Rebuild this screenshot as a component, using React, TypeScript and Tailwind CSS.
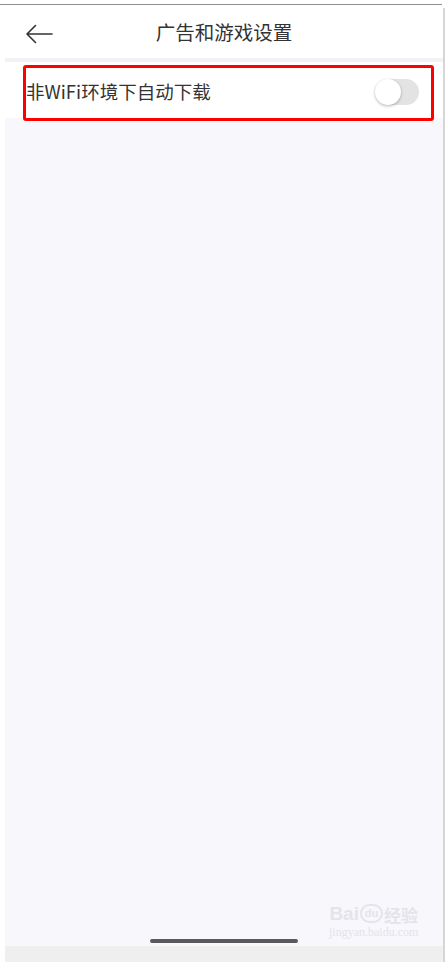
import React from "react";

export default function App() {
  const font = { fontFamily: '"Noto Sans CJK SC", "Noto Sans", sans-serif' };
  return (
    <div className="relative w-[446px] h-[962px] bg-white overflow-hidden flex flex-col" style={font}>
      <div className="h-[4px] shrink-0" />
      <div className="h-px w-[442px] bg-[#8e8e8e] shrink-0" />
      <div className="flex flex-1 min-h-0">
        <div className="w-[5px] shrink-0 bg-white" />
        <div className="w-[438px] flex flex-col">
          {/* header */}
          <div className="h-[53px] bg-white flex items-center relative shrink-0">
            <svg className="absolute left-[20px] top-[19px]" width="28" height="20" viewBox="0 0 28 20" fill="none">
              <path d="M27 10H2M10.5 1.5L2 10l8.5 8.5" stroke="#333" strokeWidth="1.6" strokeLinecap="round" strokeLinejoin="round" />
            </svg>
            <div className="flex-1 text-center text-[19.5px] text-[#333] leading-none">广告和游戏设置</div>
          </div>
          <div className="h-[4px] bg-[#f2f2f6] shrink-0" />
          {/* row */}
          <div className="h-[56px] bg-white flex items-center justify-between pl-[21px] pr-[24px] shrink-0">
            <span className="text-[18.5px] text-[#333] leading-none pt-[2px]">非WiFi环境下自动下载</span>
            <div className="relative w-[44px] h-[26px] mt-[3px]">
              <div className="absolute right-0 top-0 w-[38px] h-[26px] rounded-full bg-[#e3e3e3]" />
              <div className="absolute left-0 top-0 w-[26px] h-[26px] rounded-full bg-white shadow-[0_1px_3px_rgba(0,0,0,0.3)]" />
            </div>
          </div>
          {/* content */}
          <div className="flex-1 bg-[#f7f7fc] flex flex-col justify-end items-center pb-[3px] relative">
            <div className="w-[148px] h-[4px] rounded-full bg-[#5a5a5e]" />
          </div>
          <div className="h-[16px] bg-[#efefef] shrink-0" />
        </div>
        <div className="w-[2px] bg-[#d6d6d6] mt-[3px] shrink-0" />
        <div className="flex-1 bg-white" />
      </div>

      {/* red annotation box */}
      <div className="absolute left-[23px] top-[65px] w-[411px] h-[56px] border-[3px] border-[#ff0000] rounded-[3px]" />

      {/* watermark */}
      <div className="absolute left-[329px] top-[904px] flex flex-col items-center text-[#e4e4ea]" style={{ fontFamily: '"Liberation Serif", serif' }}>
        <div className="flex items-end gap-[1px] leading-none">
          <span className="text-[19px] font-bold" style={{ fontFamily: '"Liberation Sans", sans-serif' }}>Bai</span>
          <span className="w-[23px] h-[19px] rounded-full border-2 border-[#e4e4ea] text-[11px] font-bold flex items-center justify-center" style={{ fontFamily: '"Liberation Sans", sans-serif' }}>du</span>
          <span className="text-[17px] font-bold" style={font}>经验</span>
        </div>
        <div className="text-[12px] leading-none mt-[3px]">jingyan.baidu.com</div>
      </div>
    </div>
  );
}
